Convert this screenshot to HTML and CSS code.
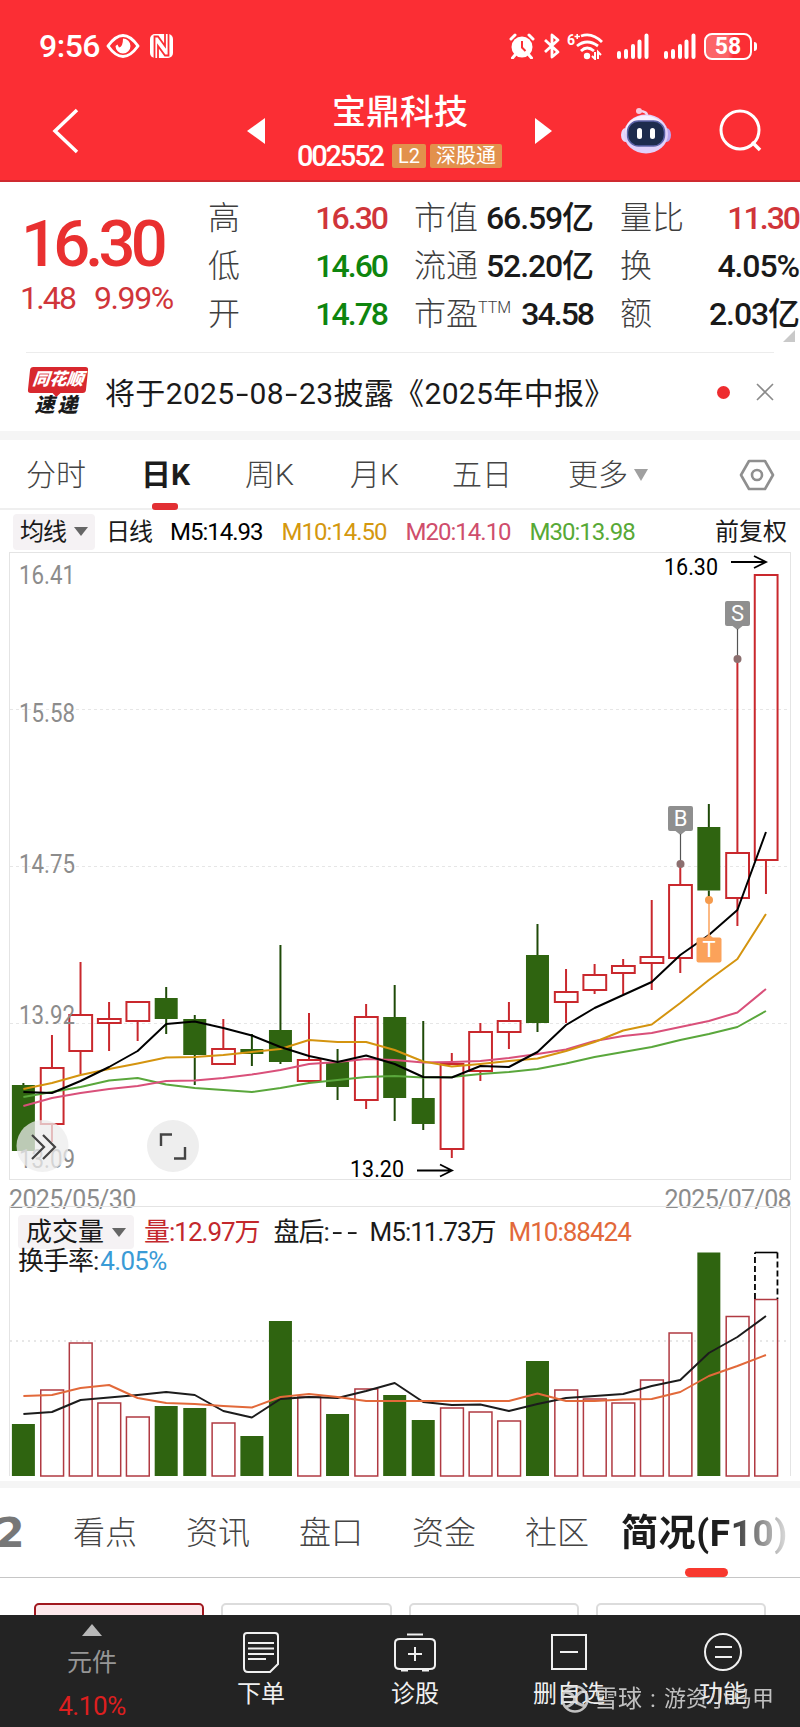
FILE: index.html
```html
<!DOCTYPE html>
<html lang="zh-CN">

<head>
    <meta charset="UTF-8">
    <meta name="viewport" content="width=device-width, initial-scale=1.0">
    <title>宝鼎科技 002552</title>
    <link rel="stylesheet" href="styles.css">
</head>

<body>
    <header class="header">
        <div class="status-bar">
            <span class="time">9:56</span>
            <svg class="eye" width="34" height="24" viewBox="0 0 34 24">
                <path d="M2 12 Q17 -9 32 12 Q17 33 2 12 Z" fill="none" stroke="#fff" stroke-width="3" stroke-linejoin="round" />
                <path d="M17 4.500 A7.500 7.500 0 1 1 9.500 12 L11.500 10.500 L13 13.500 Q17 13 17 4.500 Z" fill="#fff" />
            </svg>
            <svg class="nfc" width="24" height="24" viewBox="0 0 24 24">
                <rect x="0" y="0" width="23" height="24" rx="5" fill="#fff" />
                <path d="M4.500 24 V2.500 L8 2.500 L15 12 V0 M18.500 0 V21.500 H15 L8 12 V24" fill="none" stroke="#fb2e34" stroke-width="1.800" />
            </svg>
            <div class="status-right">
                <svg width="26" height="26" viewBox="0 0 26 26">
                    <circle cx="13" cy="14" r="10.500" fill="#fff" />
                    <path d="M2 6 L6 2 M24 6 L20 2 M6 22 L3.500 25 M20 22 L22.500 25" stroke="#fff" stroke-width="3" stroke-linecap="round" />
                    <path d="M13 8 V14.500 L16.500 18" fill="none" stroke="#fb2e34" stroke-width="2" />
                </svg>
                <svg class="bluetooth" width="18" height="26" viewBox="0 0 18 26">
                    <path d="M2 7 L15 19 L9 24 V2 L15 7 L2 19" fill="none" stroke="#fff" stroke-width="2.800" stroke-linejoin="round" />
                </svg>
                <svg class="wifi" width="37" height="27" viewBox="0 0 37 27">
                    <text x="0" y="12" class="wifi-gen">6</text>
                    <path d="M7.500 3.500 H13 M10.200 1 V6" stroke="#fff" stroke-width="1.600" />
                    <path d="M14 3 Q25 -1 35 9 M10 13 Q20 5 31 13 M14 18 Q20 12 27 18" fill="none" stroke="#fff" stroke-width="2.800" />
                    <circle cx="20" cy="23" r="3.200" fill="#fff" />
                    <path d="M28 19 V26 L25 23 M31 26 V19 L34 22" fill="none" stroke="#fff" stroke-width="2" />
                </svg>
                <svg class="signal" width="32" height="26" viewBox="0 0 32 26">
                    <path d="M2 24 V20 M9 24 V18 M16 24 V13 M22.500 24 V8.500 M29.500 24 V2.500" stroke="#fff" stroke-width="4" stroke-linecap="round" />
                </svg>
                <svg class="signal" width="32" height="26" viewBox="0 0 32 26">
                    <path d="M2 24 V20 M9 24 V18 M16 24 V13 M22.500 24 V8.500 M29.500 24 V2.500" stroke="#fff" stroke-width="4" stroke-linecap="round" />
                </svg>
                <div class="battery">58</div>
                <i class="battery-cap"></i>
            </div>
        </div>

        <div class="title-bar">
            <svg class="back" width="28" height="46" viewBox="0 0 28 46">
                <path d="M25 2 L3 23 L25 44" fill="none" stroke="#fff" stroke-width="3.500" />
            </svg>
            <i class="prev"></i>
            <div class="stock">
                <h1>宝鼎科技</h1>
                <div class="stock-code">
                    <span class="code">002552</span>
                    <span class="badge">L2</span>
                    <span class="badge">深股通</span>
                </div>
            </div>
            <i class="next"></i>
            <svg class="robot" width="50" height="48" viewBox="0 0 50 48">
                <path d="M26 10 Q27 4 18 4" fill="none" stroke="#f3d5ee" stroke-width="2.500" />
                <circle cx="18" cy="4" r="3" fill="#f8c9de" />
                <ellipse cx="4.500" cy="28" rx="4.500" ry="7" fill="#e7d9fb" />
                <ellipse cx="45.500" cy="28" rx="4.500" ry="7" fill="#b9a5ee" />
                <ellipse cx="25" cy="27" rx="22" ry="19.500" fill="#e0d0fa" />
                <ellipse cx="24" cy="24" rx="19.500" ry="15.500" fill="#f8f0ff" />
                <rect x="6.500" y="14" width="37" height="25" rx="11" fill="#1d2b4d" stroke="#5c63a8" stroke-width="1.500" />
                <rect x="16" y="21" width="5" height="11" rx="2.500" fill="#fff" />
                <rect x="29" y="21" width="5" height="11" rx="2.500" fill="#fff" />
            </svg>
            <svg class="search" width="44" height="44" viewBox="0 0 44 44">
                <circle cx="21" cy="21" r="19" fill="none" stroke="#fff" stroke-width="3" />
                <path d="M33 33 L41 41" stroke="#fff" stroke-width="3.500" />
            </svg>
        </div>
    </header>

    <section class="quote">
        <div class="price">
            <div class="price-now">16.30</div>
            <div class="price-change"><span>1.48</span><span>9.99%</span></div>
        </div>
        <div class="quote-col">
            <p><span>高</span><b class="up">16.30</b></p>
            <p><span>低</span><b class="down">14.60</b></p>
            <p><span>开</span><b class="down">14.78</b></p>
        </div>
        <div class="quote-col">
            <p><span>市值</span><b class="unit">66.59亿</b></p>
            <p><span>流通</span><b class="unit">52.20亿</b></p>
            <p><span>市盈<sup>TTM</sup></span><b>34.58</b></p>
        </div>
        <div class="quote-col">
            <p><span>量比</span><b class="up">11.30</b></p>
            <p><span>换</span><b class="unit">4.05%</b></p>
            <p><span>额</span><b class="unit">2.03亿</b></p>
        </div>
        <i class="expand"></i>
    </section>

    <section class="notice">
        <div class="notice-logo">
            <span class="logo-top">同花顺</span>
            <span class="logo-bottom">速递</span>
        </div>
        <span class="notice-text">将于2025<em>-</em>08<em>-</em>23披露《2025年中报》</span>
        <i class="dot"></i>
        <svg class="close" width="18" height="18" viewBox="0 0 18 18">
            <path d="M1 1 L17 17 M17 1 L1 17" stroke="#8a8a8a" stroke-width="1.600" />
        </svg>
    </section>

    <nav class="period-tabs">
        <a class="t1">分时</a>
        <a class="t2 active">日K</a>
        <a class="t3">周K</a>
        <a class="t4">月K</a>
        <a class="t5">五日</a>
        <a class="t6">更多<i class="caret"></i></a>
        <svg width="36" height="34" viewBox="0 0 36 34">
            <path d="M10 3 H26 L34 17 L26 31 H10 L2 17 Z" fill="none" stroke="#8f8f8f" stroke-width="2.600" stroke-linejoin="round" />
            <circle cx="18" cy="17" r="5" fill="none" stroke="#8f8f8f" stroke-width="2.600" />
        </svg>
    </nav>

    <div class="legend">
        <span class="picker">均线<i class="caret"></i></span>
        <span class="cycle">日线</span>
        <span class="m5">M5:14.93</span>
        <span class="m10">M10:14.50</span>
        <span class="m20">M20:14.10</span>
        <span class="m30">M30:13.98</span>
        <span class="adjust">前复权</span>
    </div>

    <svg id="kChart" width="800" height="629" viewBox="0 552 800 629"></svg>

    <div class="dates"><span>2025/05/30</span><span>2025/07/08</span></div>

    <div class="volume">
        <svg id="volChart" width="800" height="275" viewBox="0 1206 800 275"></svg>
        <div class="volume-legend">
            <div class="volume-row">
                <span class="picker">成交量<i class="caret"></i></span>
                <span class="v-total">量:12.97万</span>
                <span class="v-after">盘后:<em>-</em><em>-</em></span>
                <span class="v-m5">M5:11.73万</span>
                <span class="v-m10">M10:88424</span>
            </div>
            <div class="volume-row turnover">换手率:<span>4.05%</span></div>
        </div>
    </div>

    <nav class="info-tabs">
        <a class="level">2</a>
        <a>看点</a>
        <a>资讯</a>
        <a>盘口</a>
        <a>资金</a>
        <a>社区</a>
        <a class="active">简况(F10)</a>
    </nav>

    <div class="cards">
        <div class="card selected"></div>
        <div class="card"></div>
        <div class="card"></div>
        <div class="card"></div>
    </div>

    <footer class="toolbar">
        <div class="sector">
            <i></i>
            <span>元件</span>
            <b>4.10%</b>
        </div>
        <div class="tool">
            <svg width="40" height="44" viewBox="0 0 40 44">
                <path d="M6 2 H34 Q37 2 37 5 V33 L29 41 H7 Q3 41 3 37 V5 Q3 2 6 2 M7 12 H33 M7 17.500 H33 M7 23 H33 M7 28 H25" />
            </svg>
            <span>下单</span>
        </div>
        <div class="tool">
            <svg width="44" height="44" viewBox="0 0 44 44">
                <path d="M14 3.500 H30 M7 8 H37 Q42 8 42 12 V34 Q42 38 37 38 H7 Q2 38 2 34 V12 Q2 8 7 8 Z M22 16 V30 M15 23 H29 M8 39.500 H15 M29 39.500 H36" />
            </svg>
            <span>诊股</span>
        </div>
        <div class="tool">
            <svg width="44" height="44" viewBox="0 0 44 44">
                <path d="M5 4 H39 V38 H5 Z M13 21 H31" />
            </svg>
            <span>删自选</span>
        </div>
        <div class="tool">
            <svg width="44" height="44" viewBox="0 0 44 44">
                <circle cx="22" cy="21" r="18" />
                <path d="M14 16 H31 M14 26 H31" />
            </svg>
            <span>功能</span>
        </div>
        <div class="watermark">
            <svg width="30" height="30" viewBox="0 0 30 30">
                <circle cx="15" cy="15" r="12.500" fill="none" stroke="#ddd" stroke-width="2.600" />
                <path d="M5 8 Q13 9 15 15 Q17 21 26 22 M24 7 Q17 9 15 15 Q13 21 6 23" fill="none" stroke="#ddd" stroke-width="3" />
            </svg>
            <span>雪球</span><span class="colon">:</span><span class="author">游资小马甲</span>
        </div>
    </footer>

    <script>
        const STEP = 28.56;
        const FIRST = 23.4;
        const RED = "#c9282d";
        const GREEN = "#2f6410";

        // [direction, high, body top, body bottom, low, volume top]
        const days = [
            ["g", 1083, 1085, 1151, 1151, 1424],
            ["r", 1035, 1067, 1124, 1142, 1389],
            ["r", 962, 1014, 1051, 1074, 1342],
            ["r", 1002, 1018, 1023, 1051, 1402],
            ["r", 1001, 1001, 1021, 1041, 1416],
            ["g", 987, 998, 1019, 1034, 1406],
            ["g", 1015, 1019, 1055, 1085, 1408],
            ["r", 1019, 1048, 1064, 1064, 1422],
            ["g", 1034, 1049, 1054, 1066, 1436],
            ["g", 945, 1030, 1062, 1064, 1321],
            ["r", 1013, 1059, 1081, 1083, 1396],
            ["g", 1049, 1062, 1087, 1100, 1414],
            ["r", 1004, 1016, 1100, 1109, 1388],
            ["g", 985, 1017, 1098, 1121, 1395],
            ["g", 1021, 1098, 1124, 1130, 1420],
            ["r", 1053, 1063, 1149, 1158, 1407],
            ["r", 1023, 1031, 1071, 1081, 1411],
            ["r", 1002, 1020, 1032, 1049, 1420],
            ["g", 924, 955, 1023, 1032, 1361],
            ["r", 969, 991, 1002, 1023, 1389],
            ["r", 964, 974, 990, 994, 1398],
            ["r", 959, 965, 973, 994, 1402],
            ["r", 900, 956, 963, 990, 1379],
            ["r", 864, 884, 958, 973, 1332],
            ["g", 804, 827, 890.5, 900, 1252.5],
            ["r", 659, 852, 898, 926, 1315.5],
            ["r", 574, 574, 860, 894, 1298.5]
        ];

        const ma30 = [1097, 1092, 1087, 1080.5, 1078, 1084.5, 1088, 1090, 1092, 1088, 1083, 1080, 1077, 1076, 1077.5, 1077, 1074, 1072, 1069, 1063.5, 1057, 1052, 1047, 1040, 1034, 1027, 1011];
        const ma20 = [1106, 1098, 1093, 1089, 1086, 1081, 1080.5, 1078, 1074.5, 1070, 1064, 1062, 1059, 1060, 1062.5, 1062, 1061, 1058, 1054, 1049.5, 1041, 1036, 1033, 1027, 1021, 1012.5, 989];
        const ma10 = [1089, 1083, 1075, 1069, 1063.5, 1057.5, 1057, 1055, 1052, 1049, 1040, 1042, 1042, 1050, 1061.5, 1066.5, 1064, 1061, 1058.5, 1051, 1042, 1030.5, 1024.5, 1003, 980, 959, 914];
        const ma5 = [1092, 1093, 1081, 1067, 1051, 1024, 1021.5, 1028, 1035.5, 1047, 1056, 1062, 1055.5, 1064, 1077, 1077.5, 1066, 1067, 1052, 1025, 1008, 995, 982, 955, 935, 910, 832];
        const vol5 = [1414, 1412, 1400, 1397.5, 1395, 1392, 1395, 1411, 1417.5, 1399, 1397, 1398, 1391, 1383, 1402, 1405, 1404.5, 1411, 1404, 1398, 1396, 1394, 1386, 1380, 1353, 1337, 1316];
        const vol10 = [1396, 1395, 1388, 1385, 1398, 1403, 1404, 1406, 1407.5, 1397, 1394, 1397, 1401, 1401, 1401, 1401, 1401, 1401, 1393.5, 1401, 1401, 1399.5, 1399, 1392, 1376, 1366, 1355];

        const cx = i => FIRST + STEP * i;
        const line = (x1, y1, x2, y2, color, width, extra = "") =>
            `<line x1="${x1}" y1="${y1}" x2="${x2}" y2="${y2}" stroke="${color}" stroke-width="${width}" ${extra}/>`;
        const average = (values, color) =>
            `<polyline points="${values.map((y, i) => cx(i) + "," + y).join(" ")}" fill="none" stroke="${color}" stroke-width="2" stroke-linejoin="round"/>`;
        const label = (x, y, text, width, cls) =>
            `<text x="${x}" y="${y}" class="${cls}" textLength="${width}" lengthAdjust="spacingAndGlyphs">${text}</text>`;

        function bar(i, top, bottom, up, strokeWidth) {
            const x = cx(i) - 12;
            if (!up) {
                return `<rect x="${x + 0.5}" y="${top}" width="23" height="${bottom - top}" fill="${GREEN}"/>`;
            }
            return `<rect x="${x + 0.8}" y="${top + 1}" width="22.8" height="${Math.max(bottom - top - 1, 1)}" fill="none" stroke="${strokeWidth > 1.6 ? RED : "#b03a42"}" stroke-width="${strokeWidth}"/>`;
        }

        function arrow(x, y) {
            return `<path d="M${x} ${y} H${x + 34} M${x + 23} ${y - 6} L${x + 35} ${y} L${x + 23} ${y + 6}" fill="none" stroke="#000" stroke-width="1.8"/>`;
        }

        function drawCandles() {
            let out = `<rect x="9.500" y="552.500" width="781" height="627" fill="none" stroke="#e4e4e4"/>`;
            [709.5, 866.5, 1023.5].forEach(y => {
                out += line(10, y, 790, y, "#e6e6e6", 1, `stroke-dasharray="3 3"`);
            });
            days.forEach(([dir, high, top, bottom, low], i) => {
                const up = dir === "r";
                const color = up ? RED : "#1f4a08";
                out += line(cx(i), high, cx(i), top, color, 2) + line(cx(i), bottom, cx(i), low, color, 2);
                out += bar(i, top, bottom, up, 2);
            });
            out += average(ma30, "#5aa73c") + average(ma20, "#d9507a") + average(ma10, "#d4940f") + average(ma5, "#000");

            out += label(19, 584, "16.41", 56, "axis") + label(19, 722, "15.58", 56, "axis") + label(19, 873, "14.75", 56, "axis");
            out += label(19, 1024, "13.92", 56, "axis") + label(19, 1168, "13.09", 56, "axis");
            out += label(664, 575, "16.30", 54, "mark") + arrow(731, 562);
            out += label(350, 1177, "13.20", 54, "mark") + arrow(417, 1170.5);

            // trade flags
            out += flag(737.5, 601, "S") + flag(680.5, 806, "B");
            out += line(709, 900, 709, 938, "#fba25a", 1.5) + `<circle cx="709" cy="900" r="4" fill="#f59a4c"/>`;
            out += `<path d="M705 938 L709 934 L713 938 Z" fill="#fba25a"/><rect x="696.500" y="937.500" width="25" height="25" rx="2" fill="#fba25a"/>`;
            out += `<text x="709" y="957" class="flag">T</text>`;

            // floating buttons
            out += `<circle cx="42.500" cy="1146" r="26" fill="#ececec" fill-opacity="0.75"/>`;
            out += `<path d="M32 1135 L44 1147 L32 1159 M43 1135 L55 1147 L43 1159" fill="none" stroke="#444" stroke-width="2.2"/>`;
            out += `<circle cx="173" cy="1146" r="26" fill="#eeeeee"/>`;
            out += `<path d="M161 1146 V1134.500 H172 M174 1158.500 H185 V1147" fill="none" stroke="#444" stroke-width="2.400"/>`;
            document.getElementById("kChart").innerHTML = out;
        }

        function flag(x, y, letter) {
            const dotY = letter === "S" ? 659 : 864;
            return `<rect x="${x - 12.5}" y="${y}" width="25" height="25" rx="2" fill="#8f8f8f"/>
                <path d="M${x - 5} ${y + 25} L${x} ${y + 29} L${x + 5} ${y + 25} Z" fill="#8f8f8f"/>
                ${line(x, y + 28, x, dotY, "#555", 1.2)}
                <circle cx="${x}" cy="${dotY}" r="4" fill="#8c6f6f"/>
                <text x="${x}" y="${y + 19.5}" class="flag">${letter}</text>`;
        }

        function drawVolume() {
            let out = `<path d="M9.500 1476 V1206.500 H790.500 V1476" fill="none" stroke="#e4e4e4"/>`;
            out += line(10, 1341, 790, 1341, "#e0e0e0", 1.5, `stroke-dasharray="2 4"`);
            days.forEach(([dir, , , , , top], i) => {
                out += bar(i, top, 1476, dir === "r", 1.5);
            });
            const x = cx(26) - 11;
            out += `<path d="M${x} 1299 V1252.500 M${x + 22.5} 1252.500 V1299" fill="none" stroke="#000" stroke-width="1.8" stroke-dasharray="6 3"/>`;
            out += line(x, 1252.5, x + 22.5, 1252.5, "#000", 1.6);
            out += average(vol5, "#1c1c1c") + average(vol10, "#e2693a");
            document.getElementById("volChart").innerHTML = out;
        }

        drawCandles();
        drawVolume();
    </script>
</body>

</html>
```
FILE: styles.css
```css
* {
    box-sizing: border-box;
}

body {
    margin: 0;
    width: 800px;
    height: 1727px;
    overflow: hidden;
    background-color: #fff;
    color: #1a1a1a;
    font-family: Roboto, "Noto Sans CJK SC", sans-serif;
}

h1, p {
    margin: 0;
}

i, em {
    font-style: normal;
}

svg {
    display: block;
    flex: none;
}

/* Header */
.header {
    height: 182px;
    background-color: #fb2e34;
    border-bottom: 2px solid #cf2a30;
    color: #fff;
}

.status-bar {
    display: flex;
    align-items: center;
    height: 92px;
    padding: 0 43px 0 39px;
}

.time {
    width: 67px;
    font-size: 32px;
    font-weight: 500;
    letter-spacing: -0.5px;
}

.nfc {
    margin-left: 10px;
}

.status-right {
    display: flex;
    align-items: center;
    margin-left: auto;
}

.bluetooth {
    margin-left: 8px;
}

.wifi {
    margin-left: 6px;
}

.wifi-gen {
    fill: #fff;
    font-size: 14px;
    font-weight: 700;
}

.signal {
    margin-left: 13px;
}

.signal + .signal {
    margin-left: 15px;
}

.battery {
    width: 48px;
    height: 27px;
    margin-left: 8px;
    border: 2px solid #fff;
    border-radius: 8px;
    background: linear-gradient(to right, #fc6468 50%, #fb2e34 62%);
    font-size: 23px;
    font-weight: 700;
    line-height: 24px;
    text-align: center;
}

.battery-cap {
    width: 3px;
    height: 9px;
    margin-left: 2px;
    border-radius: 0 3px 3px 0;
    background-color: #fff;
}

.title-bar {
    display: flex;
    align-items: center;
    height: 78px;
    padding-left: 52px;
}

.prev, .next {
    width: 0;
    height: 0;
    border: 13px solid transparent;
}

.prev {
    margin-left: 167px;
    border-left: 0;
    border-right: 18px solid #fff;
}

.next {
    margin-left: 30px;
    border-right: 0;
    border-left: 17px solid #fff;
}

.stock {
    width: 208px;
    margin-left: 32px;
}

.stock h1 {
    padding: 0 0 0 35px;
    font-size: 34px;
    font-weight: 500;
    line-height: 40px;
}

.stock-code {
    display: flex;
    align-items: center;
    height: 38px;
    padding-top: 10px;
}

.code {
    width: 91px;
    font-size: 29px;
    font-weight: 500;
    line-height: 28px;
    letter-spacing: -2.2px;
}

.badge {
    height: 24px;
    padding: 0 6px;
    margin-left: 4px;
    border-radius: 2px;
    background-color: #e2914c;
    font-size: 20px;
    line-height: 24px;
    white-space: nowrap;
}

.robot {
    margin-left: 69px;
}

.search {
    margin-left: 48px;
}

/* Quote */
.quote {
    position: relative;
    display: flex;
    height: 171px;
    padding-top: 12px;
}

.quote::after {
    content: "";
    position: absolute;
    left: 26px;
    right: 26px;
    bottom: 0;
    height: 1px;
    background-color: #ececec;
}

.price {
    width: 208px;
    padding: 12px 0 0 20px;
    color: #e93030;
}

.price-now {
    font-size: 65px;
    font-weight: 500;
    line-height: 76px;
    letter-spacing: -4.8px;
    padding-left: 1px;
}

.price-change {
    display: flex;
    gap: 20px;
    color: #d0353a;
    font-size: 32px;
    line-height: 32px;
    letter-spacing: -1.4px;
}

.price-change span:first-child {
    width: 54px;
    letter-spacing: -1.8px;
}

.quote-col {
    width: 179px;
    margin-right: 27px;
}

.quote-col:last-of-type {
    margin-right: 0;
}

.quote-col p {
    display: flex;
    justify-content: space-between;
    height: 48px;
    font-size: 32px;
    line-height: 48px;
    white-space: nowrap;
}

.quote-col span {
    color: #3e3e3e;
    font-weight: 300;
}

.quote-col sup {
    font-size: 16px;
    line-height: 0;
    vertical-align: 12px;
}

.quote-col b {
    font-weight: 500;
    letter-spacing: -2px;
}

.quote-col .unit {
    letter-spacing: -1.1px;
}

.quote-col .up {
    color: #d0353a;
}

.quote-col .down {
    color: #0e850e;
}

.expand {
    position: absolute;
    right: 5px;
    bottom: 11px;
    border-left: 12px solid transparent;
    border-bottom: 12px solid #c9c9c9;
}

/* Notice */
.notice {
    display: flex;
    align-items: center;
    height: 87px;
    padding: 0 26px 0 27px;
    border-bottom: 9px solid #f5f5f5;
}

.notice-logo {
    display: flex;
    flex-direction: column;
    align-items: center;
    width: 61px;
    font-style: italic;
    font-weight: 900;
}

.logo-top {
    position: relative;
    width: 58px;
    height: 26px;
    border-radius: 3px;
    background-color: #d8282e;
    color: #fff;
    font-size: 17px;
    line-height: 25px;
    text-align: center;
    transform: skewX(-6deg);
}

.logo-top::after {
    content: "";
    position: absolute;
    left: 25px;
    bottom: -4px;
    border: 4px solid transparent;
    border-top-color: #d8282e;
    border-bottom: 0;
}

.logo-bottom {
    font-size: 20px;
    line-height: 25px;
    letter-spacing: 3px;
}

.notice-text {
    margin: -3px 0 0 17px;
    font-size: 30px;
    letter-spacing: 0.35px;
    white-space: nowrap;
}

.notice-text em {
    display: inline-block;
    width: 15px;
    text-align: center;
    transform: scaleX(1.5);
}

.dot {
    width: 13px;
    height: 13px;
    margin-left: auto;
    border-radius: 50%;
    background-color: #ee2c2f;
}

.close {
    margin-left: 26px;
}

/* Period tabs */
.period-tabs {
    display: flex;
    align-items: center;
    height: 70px;
    padding: 1px 0 0 26px;
    border-bottom: 2px solid #efefef;
    color: #444;
    font-size: 30px;
    line-height: 69px;
    white-space: nowrap;
}

.period-tabs a {
    position: relative;
    font-weight: 300;
}

.period-tabs .t1 {
    width: 115px;
}

.period-tabs .t2 {
    width: 104px;
}

.period-tabs .t3 {
    width: 105px;
}

.period-tabs .t4 {
    width: 102px;
}

.period-tabs .t5 {
    width: 116px;
}

.period-tabs .t6 {
    width: 171px;
}

.period-tabs .active {
    color: #1c1c1c;
    font-weight: 700;
}

.period-tabs .active::after {
    content: "";
    position: absolute;
    left: 11px;
    bottom: -1px;
    width: 26px;
    height: 7px;
    border-radius: 3px;
    background-color: #e22f33;
}

.caret {
    display: inline-block;
    border: 7px solid transparent;
    border-top: 9px solid #666;
    border-bottom: 0;
    vertical-align: 4px;
    margin-left: 8px;
}

.period-tabs .caret {
    border-width: 12px 7.5px 0;
    border-top-color: #a0a0a0;
    vertical-align: 4px;
    margin-left: 6px;
}

/* Moving average legend */
.legend {
    display: flex;
    align-items: center;
    height: 42px;
    padding: 1px 13px 0;
    font-size: 24px;
    line-height: 36px;
    letter-spacing: -1px;
    white-space: nowrap;
}

.picker {
    height: 36px;
    padding: 0 7px;
    border-radius: 4px;
    background-color: #f5f2f4;
}

.cycle {
    margin-left: 11px;
}

.m5 {
    margin-left: 18px;
    color: #000;
}

.m10, .m20, .m30 {
    margin-left: 19px;
}

.m10 {
    color: #d4980f;
}

.m20 {
    color: #cf4e6c;
}

.m30 {
    color: #57a936;
}

.adjust {
    margin-left: auto;
    letter-spacing: 0;
}

/* Charts */
.axis, .mark, .flag {
    font-family: Roboto, sans-serif;
    font-size: 25px;
}

.axis {
    fill: #8c8c8c;
}

.mark {
    fill: #000;
    font-size: 24px;
}

.flag {
    fill: #fff;
    font-size: 22px;
    text-anchor: middle;
}

.dates {
    display: flex;
    justify-content: space-between;
    height: 25px;
    padding: 4px 9px 0;
    color: #8c8c8c;
    font-size: 25px;
    line-height: 30px;
    letter-spacing: -0.65px;
}

.volume {
    position: relative;
    height: 282px;
    border-bottom: 7px solid #f5f5f5;
}

.volume-legend {
    position: absolute;
    top: 9px;
    left: 18px;
}

.volume-row {
    display: flex;
    align-items: center;
    height: 34px;
    font-size: 26px;
    line-height: 34px;
    letter-spacing: -1px;
    white-space: nowrap;
}

.volume-row .picker {
    width: 116px;
    height: 34px;
    padding: 0 0 0 8px;
    letter-spacing: 0;
}

.v-total {
    margin-left: 10px;
    color: #c3282d;
}

.v-after {
    width: 84px;
    margin-left: 14px;
}

.v-after em {
    display: inline-block;
    width: 15px;
    text-align: center;
    transform: scaleX(1.4);
}

.v-m5 {
    margin-left: 12px;
}

.v-m10 {
    margin-left: 13px;
    color: #e2693a;
}

.turnover {
    height: 24px;
    line-height: 24px;
}

.turnover span {
    color: #3a9bd6;
    margin-left: 2px;
    letter-spacing: -0.7px;
}

/* Info tabs */
.info-tabs {
    display: flex;
    align-items: center;
    height: 90px;
    border-bottom: 1px solid #c6c6c6;
    color: #444;
    font-size: 32px;
    line-height: 92px;
    white-space: nowrap;
}

.info-tabs a {
    width: 113px;
    font-weight: 300;
}

.info-tabs .level {
    width: 73px;
    color: #777;
    font-family: "DejaVu Sans", sans-serif;
    font-size: 41px;
    font-weight: 700;
    text-indent: -4px;
}

.info-tabs .active {
    position: relative;
    width: auto;
    height: 90px;
    margin-left: -17px;
    background: linear-gradient(to right, #1c1c1c 62%, #e0e0e0 100%);
    -webkit-background-clip: text;
    background-clip: text;
    color: transparent;
    font-size: 37px;
    font-weight: 700;
    letter-spacing: 0.6px;
}

.info-tabs .active::after {
    content: "";
    position: absolute;
    left: 64px;
    bottom: 1px;
    width: 43px;
    height: 9px;
    border-radius: 5px;
    background-color: #f8392f;
}

.cards {
    display: flex;
    gap: 17px;
    height: 37px;
    padding: 25px 34px 0;
    overflow: hidden;
}

.card {
    flex: 1;
    height: 40px;
    border: 2px solid #dcdcdc;
    border-radius: 5px;
}

.card.selected {
    border-color: #a0181f;
    background-color: #fce8eb;
}

/* Bottom toolbar */
.toolbar {
    position: relative;
    display: flex;
    height: 112px;
    background-color: #232323;
    color: #f0f0f0;
}

.sector, .tool {
    display: flex;
    flex-direction: column;
    align-items: center;
    width: 154px;
}

.sector {
    width: 184px;
    color: #969696;
}

.sector i {
    margin-top: 9px;
    border: 10px solid transparent;
    border-top: 0;
    border-bottom: 12px solid #b8b8b8;
}

.sector span {
    margin-top: 11px;
    font-size: 25px;
    line-height: 32px;
}

.sector b {
    margin-top: 9px;
    color: #dc1f1f;
    font-size: 26px;
    font-weight: 400;
    line-height: 36px;
    letter-spacing: -0.4px;
}

.tool svg {
    margin-top: 16px;
    fill: none;
    stroke: #f0f0f0;
    stroke-width: 2;
}

.tool span {
    margin-top: 3px;
    font-size: 24px;
    line-height: 32px;
}

.watermark {
    position: absolute;
    left: 560px;
    top: 68px;
    display: flex;
    align-items: center;
    height: 32px;
    color: #dcdcdc;
    font-size: 24px;
    line-height: 32px;
    white-space: nowrap;
    opacity: 0.85;
}

.watermark svg {
    margin-right: 4px;
}

.colon {
    width: 22px;
    text-align: center;
}

.author {
    font-size: 22px;
}
```
